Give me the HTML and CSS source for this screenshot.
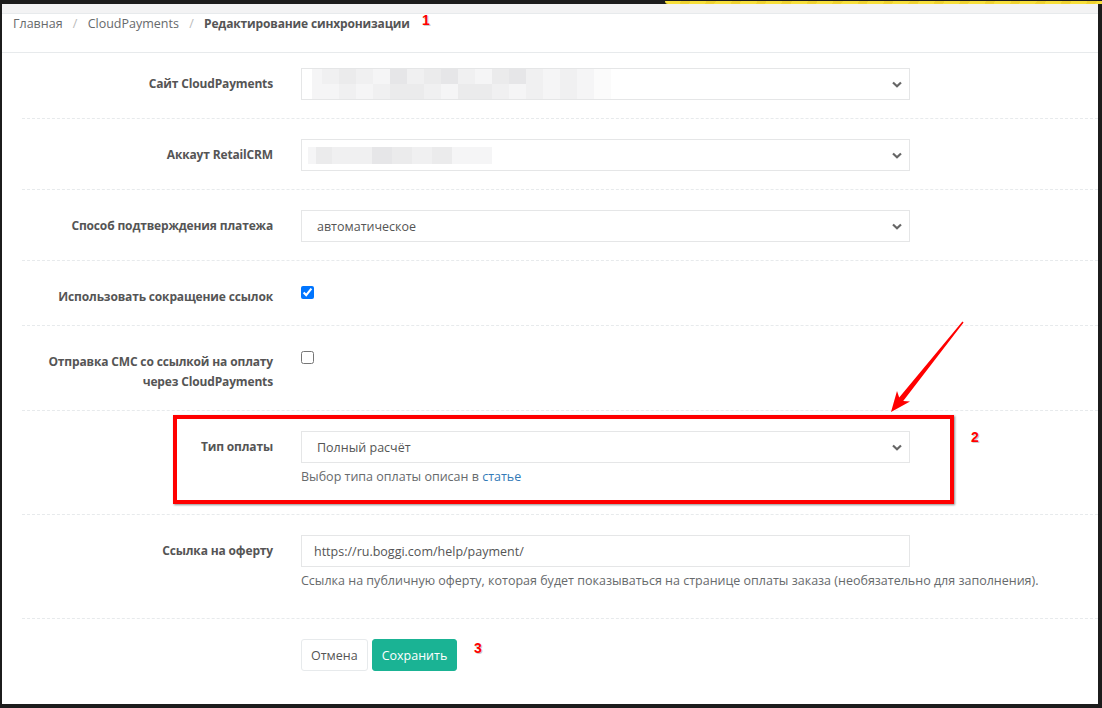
FILE: index.html
```html
<!DOCTYPE html>
<html lang="ru">
<head>
    <meta charset="UTF-8">
    <title>Редактирование синхронизации</title>
    <link rel="stylesheet" href="styles.css">
</head>
<body>

    <div class="strip"><div class="strip-yellow"></div></div>

    <div class="screen">
        <div class="topbar"></div>

        <div class="crumbs">
            <span class="crumb">Главная</span>
            <span class="sep">/</span>
            <span class="crumb">CloudPayments</span>
            <span class="sep">/</span>
            <span class="crumb active">Редактирование синхронизации</span>
        </div>

        <div class="form">

            <div class="row first">
                <div class="label">Сайт CloudPayments</div>
                <div class="control">
                    <div class="select">
                        <div class="blur blur-two">
                            <div class="blur-line">
                                <i class="b1 w10"></i><i class="b2 w17"></i><i class="b3 w17"></i><i class="b2 w17"></i><i class="b1 w17"></i><i class="b4 w17"></i><i class="b2 w17"></i><i class="b3 w17"></i><i class="b4 w17"></i><i class="b2 w17"></i><i class="b1 w17"></i><i class="b3 w17"></i><i class="b4 w17"></i><i class="b2 w17"></i><i class="b1 w17"></i><i class="b2 w17"></i><i class="b1 w17"></i><i class="b0 w17"></i>
                            </div>
                            <div class="blur-line">
                                <i class="b1 w10"></i><i class="b1 w17"></i><i class="b2 w17"></i><i class="b1 w17"></i><i class="b2 w17"></i><i class="b3 w17"></i><i class="b3 w17"></i><i class="b2 w17"></i><i class="b1 w17"></i><i class="b3 w17"></i><i class="b3 w17"></i><i class="b2 w17"></i><i class="b1 w17"></i><i class="b2 w17"></i><i class="b1 w17"></i><i class="b2 w17"></i><i class="b1 w17"></i><i class="b0 w17"></i>
                            </div>
                        </div>
                        <svg class="chev" width="10" height="7" viewBox="0 0 10 7"><path d="M1 1.5 L5 5.2 L9 1.5" fill="none" stroke="#666" stroke-width="2.2"/></svg>
                    </div>
                </div>
            </div>

            <div class="row">
                <div class="label">Аккаут RetailCRM</div>
                <div class="control">
                    <div class="select">
                        <div class="blur blur-one">
                            <div class="blur-line">
                                <i class="b1 w8"></i><i class="b3 w16"></i><i class="b2 w20"></i><i class="b2 w20"></i><i class="b4 w20"></i><i class="b3 w20"></i><i class="b2 w20"></i><i class="b3 w20"></i><i class="b1 w20"></i><i class="b1 w20"></i>
                            </div>
                        </div>
                        <svg class="chev" width="10" height="7" viewBox="0 0 10 7"><path d="M1 1.5 L5 5.2 L9 1.5" fill="none" stroke="#666" stroke-width="2.2"/></svg>
                    </div>
                </div>
            </div>

            <div class="row">
                <div class="label">Способ подтверждения платежа</div>
                <div class="control">
                    <div class="select">
                        <span class="value">автоматическое</span>
                        <svg class="chev" width="10" height="7" viewBox="0 0 10 7"><path d="M1 1.5 L5 5.2 L9 1.5" fill="none" stroke="#666" stroke-width="2.2"/></svg>
                    </div>
                </div>
            </div>

            <div class="row">
                <div class="label">Использовать сокращение ссылок</div>
                <div class="control">
                    <input class="check" type="checkbox" checked>
                </div>
            </div>

            <div class="row">
                <div class="label">Отправка СМС со ссылкой на оплату<br>через CloudPayments</div>
                <div class="control">
                    <input class="check" type="checkbox">
                </div>
            </div>

            <div class="row">
                <div class="label">Тип оплаты</div>
                <div class="control">
                    <div class="select">
                        <span class="value">Полный расчёт</span>
                        <svg class="chev" width="10" height="7" viewBox="0 0 10 7"><path d="M1 1.5 L5 5.2 L9 1.5" fill="none" stroke="#666" stroke-width="2.2"/></svg>
                    </div>
                    <p class="help">Выбор типа оплаты описан в <a href="#">статье</a></p>
                </div>
            </div>

            <div class="row">
                <div class="label">Ссылка на оферту</div>
                <div class="control">
                    <div class="input">https://ru.boggi.com/help/payment/</div>
                    <p class="help">Ссылка на публичную оферту, которая будет показываться на странице оплаты заказа (необязательно для заполнения).</p>
                </div>
            </div>

            <div class="row last">
                <div class="label"></div>
                <div class="control buttons">
                    <button class="btn">Отмена</button>
                    <button class="btn btn-save">Сохранить</button>
                </div>
            </div>

        </div>

        <!-- annotations drawn over the screenshot -->
        <div class="mark-box"></div>
        <svg class="arrow" width="1096" height="700" viewBox="2 4 1096 700">
            <polygon points="891,412 910,401.5 903.2,401 963.6,322.5 962.4,321.5 899.2,397.6 897,391" fill="#f00"/>
        </svg>
        <span class="num num-1">1</span>
        <span class="num num-2">2</span>
        <span class="num num-3">3</span>
    </div>

</body>
</html>
```

FILE: styles.css
```css
body{
    margin: 0;
    background-color: #1c1c1c;
    font-family: "Open Sans", "Noto Sans", sans-serif;
    font-size: 12.5px;
    color: #676a6c;
}
.strip{
    height: 4px;
    display: flex;
    justify-content: flex-end;
}
.strip-yellow{
    width: 437px;
    height: 3px;
    margin-top: 1px;
    background: repeating-linear-gradient(120deg, #f7df3b 0px, #f7df3b 14px, #efd22f 14px, #efd22f 22px);
    border-bottom-left-radius: 3px;
}
.screen{
    position: relative;
    width: 1096px;
    height: 700px;
    margin-left: 2px;
    background-color: #fff;
    overflow: hidden;
}
.topbar{
    height: 9px;
    background-color: #f3f3f4;
    border-bottom: 1px solid #e7eaec;
}
.crumbs{
    height: 38px;
    padding: 0 0 0 11px;
    line-height: 20px;
    border-bottom: 1px solid #e7eaec;
    color: #676a6c;
}
.sep{
    color: #bbb;
    margin: 0 7px;
}
.active{
    font-weight: 700;
    font-size: 12px;
    letter-spacing: -0.15px;
    color: #555;
}

.form{
    margin-left: 20px;
}
.row{
    display: grid;
    grid-template-columns: 251px 1fr;
    column-gap: 28px;
    padding: 20px 0 18px;
    border-bottom: 1px dashed #e7eaec;
}
.row.first{
    padding-top: 15px;
}
.row.last{
    border-bottom: none;
}
.label{
    text-align: right;
    font-weight: 700;
    font-size: 12px;
    letter-spacing: -0.15px;
    color: #555;
    padding-top: 6px;
    line-height: 20px;
}
.select, .input{
    box-sizing: border-box;
    width: 609px;
    height: 32px;
    border: 1px solid #e5e6e7;
    display: flex;
    align-items: center;
    justify-content: space-between;
    color: #555;
}
.select{
    padding: 0 7px 0 15px;
}
.input{
    padding: 0 12px;
}
.chev{
    flex: none;
}
.blur{
    display: flex;
    flex-direction: column;
}
.blur-two{
    margin-left: -5px;
}
.blur-one{
    margin-left: -9px;
}
.blur-line{
    display: flex;
}
.blur-two .blur-line i{
    height: 15px;
}
.blur-one .blur-line i{
    height: 17px;
}
.blur i{
    display: block;
}
.w8{ width: 8px; }
.w10{ width: 10px; }
.w16{ width: 16px; }
.w17{ width: 17px; }
.w20{ width: 20px; }
.b0{ background-color: #fbfbfb; }
.b1{ background-color: #f5f5f6; }
.b2{ background-color: #f0f0f1; }
.b3{ background-color: #ebebec; }
.b4{ background-color: #e6e6e8; }

.check{
    margin: 5px 0 0 0;
    width: 13px;
    height: 13px;
}
.help{
    margin: 4px 0 9px;
    line-height: 20px;
}
.help a{
    color: #337ab7;
    text-decoration: none;
}
.buttons{
    display: flex;
    gap: 4px;
}
.btn{
    height: 32px;
    padding: 0 9px;
    border: 1px solid #e7eaec;
    border-radius: 3px;
    background-color: #fff;
    color: #555;
    font-family: "Open Sans", "Noto Sans", sans-serif;
    font-size: 12.5px;
}
.btn-save{
    background-color: #1ab394;
    border-color: #1ab394;
    color: #fff;
}

.mark-box{
    position: absolute;
    left: 171px;
    top: 411px;
    width: 773px;
    height: 81px;
    border: 4px solid #f00;
    box-shadow: 1px 1px 2px rgba(0, 0, 0, 0.45);
}
.arrow{
    position: absolute;
    left: 0;
    top: 0;
    pointer-events: none;
}
.num{
    position: absolute;
    font-family: "Liberation Sans", sans-serif;
    font-weight: 700;
    font-size: 14px;
    color: #f00;
    text-shadow: 1px 1px 0 #ccc, -1px 0 0 #fff;
}
.num-1{ left: 420px; top: 8px; }
.num-2{ left: 969px; top: 425px; }
.num-3{ left: 472px; top: 636px; }
```
